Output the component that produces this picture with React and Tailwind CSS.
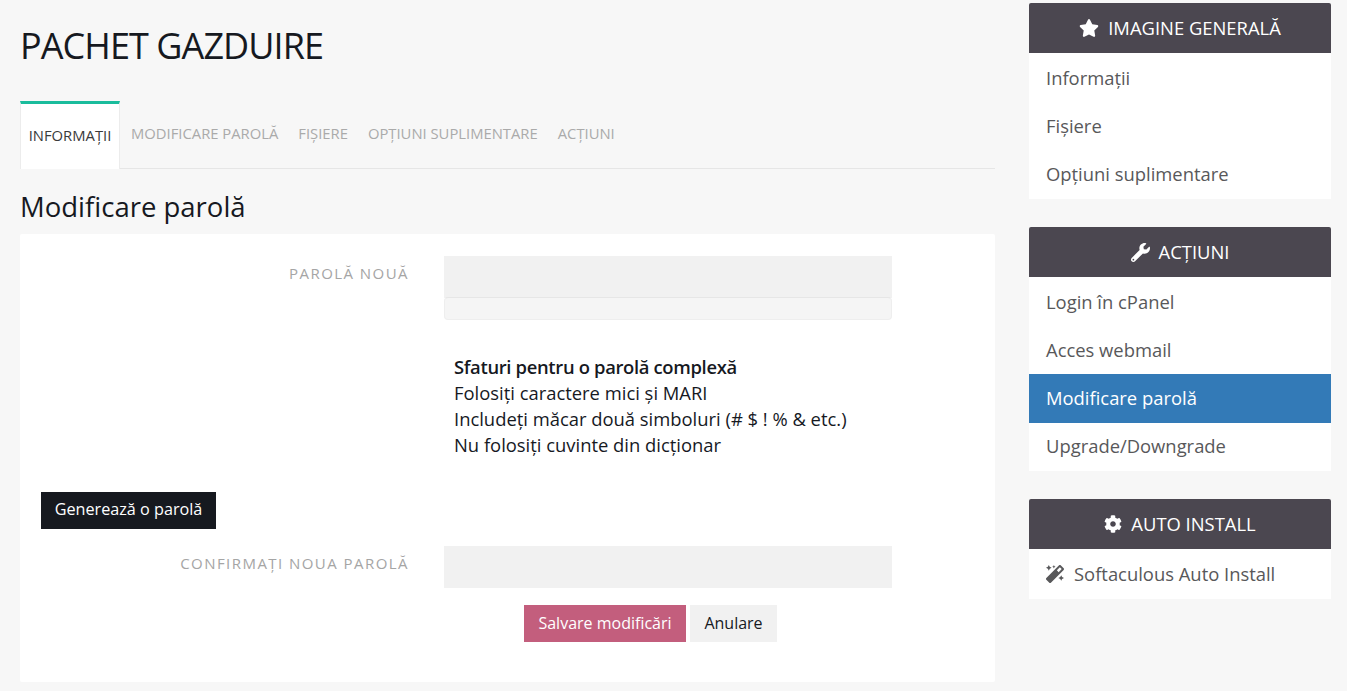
import React from 'react';
import { FaStar, FaWrench, FaCog, FaMagic } from 'react-icons/fa';

const SideHeader = ({ icon, children }) => (
  <div className="h-[50px] bg-[#4b4750] rounded-t-[2px] flex items-center justify-center gap-[9px] text-white text-[18.4px] uppercase">
    {icon}
    <span>{children}</span>
  </div>
);

const SideItem = ({ children, active }) => (
  <div
    className={
      'px-[17px] flex items-center text-[18.4px] ' +
      (active ? 'h-[49px] -mb-px pb-px bg-[#337ab7] text-white' : 'h-[48px] text-[#58585a]')
    }
  >
    {children}
  </div>
);

const Input = () => <div className="w-[448px] h-[42px] bg-[#f1f1f1]" />;

const Label = ({ children }) => (
  <div className="w-[368px] pt-[7px] text-right text-[15px] tracking-[1.45px] leading-[20px] text-[#a5a5a5] uppercase">
    {children}
  </div>
);

const App = () => {
  return (
    <div className="min-h-[691px] h-[691px] overflow-hidden bg-[#f7f7f7] flex pl-[20px] font-['Open_Sans',sans-serif] text-[#16191f]">
      {/* Main column */}
      <div className="w-[975px]">
        <h1 className="pt-[23px] h-[101px] text-[36px] tracking-[-0.93px] leading-[45px] text-[#16191f]">PACHET GAZDUIRE</h1>

        <div className="h-[68px] flex items-stretch border-b border-[#e6e6e6] text-[14.8px]">
          <div className="w-[100px] bg-white border-t-[3px] border-t-[#1abc9c] border-x border-x-[#ececec] flex items-center justify-center pb-[2px] text-[#3a3a3a] -mb-px">
            INFORMAȚII
          </div>
          <div className="flex items-center gap-[20px] pl-[11px] text-[#aaaaaa] pb-[3px]">
            <span>MODIFICARE PAROLĂ</span>
            <span>FIȘIERE</span>
            <span>OPȚIUNI SUPLIMENTARE</span>
            <span>ACȚIUNI</span>
          </div>
        </div>

        <h2 className="h-[65px] pt-[20px] text-[27.5px] leading-[36px]">Modificare parolă</h2>

        <div className="h-[448px] bg-white rounded-[2px] pt-[22px] px-[21px]">
          <div className="flex">
            <Label>Parolă nouă</Label>
            <div className="ml-[35px]">
              <Input />
              <div className="w-[448px] h-[23px] -mt-px bg-[#f5f5f5] border border-[#eeeeee] border-t-[#e6e6e6] rounded-[4px]" />
              <div className="mt-[34px] ml-[10px] text-[18.4px] leading-[26px]">
                <div className="font-semibold tracking-[-0.33px]">Sfaturi pentru o parolă complexă</div>
                <div>Folosiți caractere mici și MARI</div>
                <div>Includeți măcar două simboluri (# $ ! % &amp; etc.)</div>
                <div>Nu folosiți cuvinte din dicționar</div>
              </div>
            </div>
          </div>

          <button className="mt-[34px] block h-[37px] w-[175px] pb-[2px] bg-[#16191f] text-white text-[16.2px]">
            Generează o parolă
          </button>

          <div className="flex mt-[17px]">
            <Label>Confirmați noua parolă</Label>
            <div className="ml-[35px]">
              <Input />
            </div>
          </div>

          <div className="flex gap-[4px] mt-[17px] ml-[483px] text-[16px]">
            <button className="h-[37px] w-[162px] pb-[2px] bg-[#c35e7d] text-white">Salvare modificări</button>
            <button className="h-[37px] w-[87px] pb-[2px] bg-[#f1f1f1] text-[#16191f]">Anulare</button>
          </div>
        </div>
      </div>

      {/* Sidebar */}
      <div className="w-[302px] ml-[34px] pt-[3px] flex flex-col gap-[28px]">
        <div>
          <SideHeader icon={<FaStar className="text-[20px]" />}>Imagine generală</SideHeader>
          <div className="bg-white py-px">
            <SideItem>Informații</SideItem>
            <SideItem>Fișiere</SideItem>
            <SideItem>Opțiuni suplimentare</SideItem>
          </div>
        </div>
        <div>
          <SideHeader icon={<FaWrench className="text-[19px]" />}>Acțiuni</SideHeader>
          <div className="bg-white py-px">
            <SideItem>Login în cPanel</SideItem>
            <SideItem>Acces webmail</SideItem>
            <SideItem active>Modificare parolă</SideItem>
            <SideItem>Upgrade/Downgrade</SideItem>
          </div>
        </div>
        <div>
          <SideHeader icon={<FaCog className="text-[18px]" />}>Auto Install</SideHeader>
          <div className="bg-white">
            <div className="h-[50px] px-[17px] flex items-center gap-[10px] text-[18.4px] text-[#58585a]">
              <FaMagic className="text-[18px]" />
              <span>Softaculous Auto Install</span>
            </div>
          </div>
        </div>
      </div>
    </div>
  );
};

export default App;
